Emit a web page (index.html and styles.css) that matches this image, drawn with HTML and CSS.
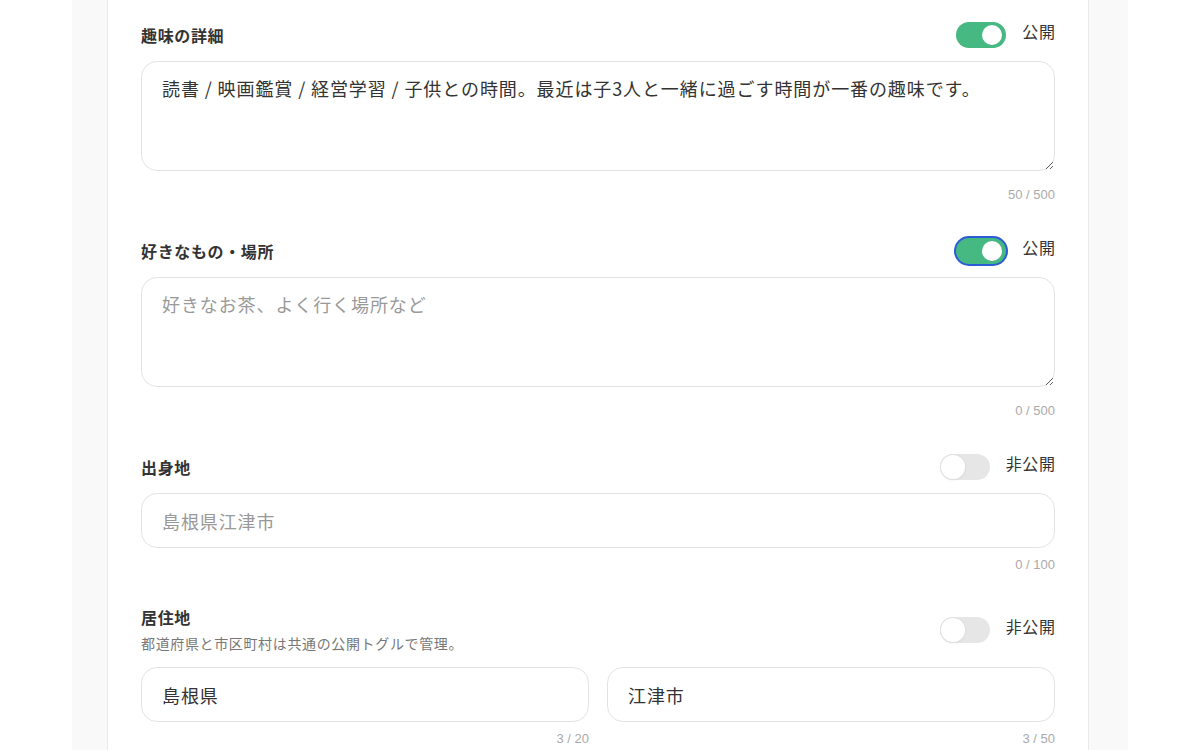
FILE: index.html
```html
<!DOCTYPE html>
<html lang="ja">
<head>
	<meta charset="UTF-8">
	<title>プロフィール編集</title>
	<link rel="stylesheet" href="styles.css">
</head>
<body>
	<div class="page">
		<div class="card">
			<div class="field">
				<div class="field-head">
					<div class="field-title">
						<label class="label">趣味の詳細</label>
					</div>
					<div class="visibility">
						<span class="toggle on"></span>
						<span class="visibility-text">公開</span>
					</div>
				</div>
				<textarea class="box textarea">読書 / 映画鑑賞 / 経営学習 / 子供との時間。最近は子3人と一緒に過ごす時間が一番の趣味です。</textarea>
				<div class="count">50 / 500</div>
			</div>

			<div class="field">
				<div class="field-head">
					<div class="field-title">
						<label class="label">好きなもの・場所</label>
					</div>
					<div class="visibility">
						<span class="toggle on focus"></span>
						<span class="visibility-text">公開</span>
					</div>
				</div>
				<textarea class="box textarea" placeholder="好きなお茶、よく行く場所など"></textarea>
				<div class="count">0 / 500</div>
			</div>

			<div class="field short">
				<div class="field-head">
					<div class="field-title">
						<label class="label">出身地</label>
					</div>
					<div class="visibility">
						<span class="toggle"></span>
						<span class="visibility-text">非公開</span>
					</div>
				</div>
				<input class="box input" type="text" placeholder="島根県江津市">
				<div class="count">0 / 100</div>
			</div>

			<div class="field">
				<div class="field-head">
					<div class="field-title">
						<label class="label">居住地</label>
						<p class="hint">都道府県と市区町村は共通の公開トグルで管理。</p>
					</div>
					<div class="visibility">
						<span class="toggle"></span>
						<span class="visibility-text">非公開</span>
					</div>
				</div>
				<div class="pair">
					<div>
						<input class="box input" type="text" value="島根県">
						<div class="count">3 / 20</div>
					</div>
					<div>
						<input class="box input" type="text" value="江津市">
						<div class="count">3 / 50</div>
					</div>
				</div>
			</div>
		</div>
	</div>
</body>
</html>
```

FILE: styles.css
```css
	body{
		margin:0;
		background:#fff;
		font-family:"Noto Sans CJK JP","Noto Sans",sans-serif;
		letter-spacing:0.04em;
		color:#333;
	}
	.page{
		width:1056px;
		min-height:750px;
		margin:0 auto;
		padding:0 39px 0 35px;
		box-sizing:border-box;
		background:#f9f9f9;
	}
	.card{
		background:#fff;
		border-left:1px solid #ebebeb;
		border-right:1px solid #ebebeb;
		padding:22px 33px 40px;
	}
	.field{
		margin-bottom:35px;
	}
	.field.short{
		margin-bottom:33px;
	}
	.field-head{
		display:flex;
		justify-content:space-between;
		align-items:center;
		margin-bottom:13px;
	}
	.label{
		display:block;
		font-size:16px;
		font-weight:700;
		line-height:22px;
		color:#333;
	}
	.hint{
		margin:5px 0 1px;
		font-size:14px;
		line-height:20px;
		color:#777;
	}
	.visibility{
		display:flex;
		align-items:flex-start;
		gap:16px;
	}
	.visibility-text{
		margin-right:-0.04em;
		font-size:16px;
		line-height:18px;
		color:#333;
	}
	.toggle{
		position:relative;
		display:block;
		width:50px;
		height:26px;
		border-radius:13px;
		background:#e6e6e6;
		box-sizing:border-box;
	}
	.toggle:before{
		position:absolute;
		top:1px;
		left:1px;
		content:'';
		width:24px;
		height:24px;
		border-radius:50%;
		background:#fff;
		box-shadow:0 0 0 1px #e0e0e0,0 1px 2px rgba(0,0,0,0.1);
	}
	.toggle.on{
		background:#46b882;
	}
	.toggle.on:before{
		left:auto;
		right:4px;
		top:3px;
		width:20px;
		height:20px;
		box-shadow:none;
	}
	.toggle.focus{
		box-shadow:0 0 0 2px #2c5bd6;
	}
	.box{
		display:block;
		width:100%;
		margin:0;
		box-sizing:border-box;
		border:1px solid #e3e3e3;
		border-radius:16px;
		background:#fff;
		font-family:inherit;
		font-size:18px;
		letter-spacing:0.05em;
		color:#333;
		outline:none;
	}
	.box::placeholder{
		color:#999;
	}
	.textarea{
		height:110px;
		padding:12px 20px;
		line-height:1.6;
		resize:vertical;
	}
	.input{
		height:55px;
		padding:0 20px;
	}
	.count{
		margin-top:9px;
		font-size:13px;
		line-height:16px;
		letter-spacing:0;
		text-align:right;
		color:#aaa;
		font-family:"Liberation Sans","Noto Sans",sans-serif;
	}
	.textarea + .count{
		margin-top:16px;
	}
	.pair{
		display:grid;
		grid-template-columns:1fr 1fr;
		gap:18px;
	}
```
